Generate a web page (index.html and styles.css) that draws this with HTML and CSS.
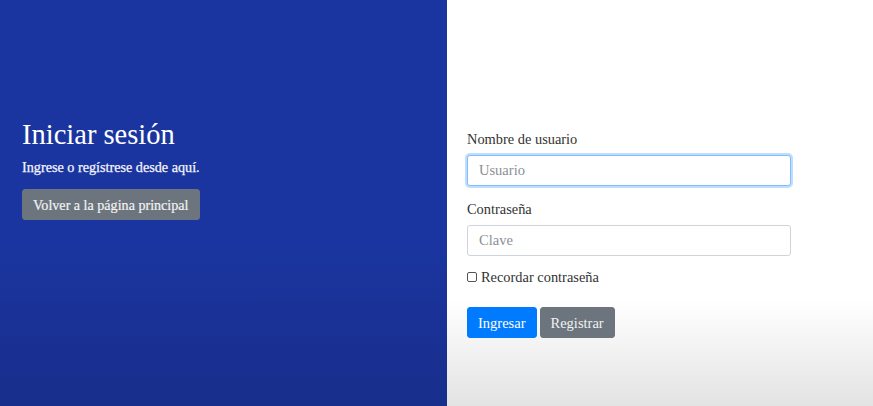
FILE: index.html
```html
<!DOCTYPE html>
<html lang="es">
<head>
<meta charset="utf-8">
<title>Iniciar sesión</title>
<link rel="stylesheet" href="styles.css">
</head>
<body>
<div class="page">
  <section class="intro">
    <h1 class="intro-title">Iniciar sesión</h1>
    <p class="intro-text">Ingrese o regístrese desde aquí.</p>
    <button class="btn btn-gray btn-back" type="button">Volver a la página principal</button>
  </section>
  <section class="panel">
    <form class="login-form">
      <label class="field-label" for="user">Nombre de usuario</label>
      <input class="field-input field-focus" id="user" type="text" placeholder="Usuario">
      <label class="field-label" for="pass">Contraseña</label>
      <input class="field-input" id="pass" type="password" placeholder="Clave">
      <label class="check">
        <span class="check-box"></span>
        <span class="check-text">Recordar contraseña</span>
      </label>
      <div class="actions">
        <button class="btn btn-blue" type="button">Ingresar</button>
        <button class="btn btn-gray" type="button">Registrar</button>
      </div>
    </form>
  </section>
</div>
</body>
</html>
```

FILE: styles.css
```css
* { box-sizing: border-box; }
html, body { margin: 0; padding: 0; }
body {
  font-family: "Liberation Serif", "DejaVu Serif", serif;
  color: #212529;
  width: 873px;
  height: 406px;
  overflow: hidden;
}
.page {
  display: flex;
  height: 406px;
}
.intro {
  width: 447px;
  flex: none;
  background: linear-gradient(to bottom, #1b35a0 0%, #1b35a0 60%, #182e8b 100%);
  color: #fff;
  padding: 118px 0 0 22px;
}
.intro-title {
  margin: 0;
  font-weight: 400;
  font-size: 28.5px;
  line-height: 34px;
}
.intro-text {
  margin: 5px 0 12px;
  font-size: 14.2px;
  line-height: 20px;
  font-weight: 400;
  color: #f4f5fb;
  -webkit-text-stroke: 0.25px #f4f5fb;
}
.btn {
  font-family: inherit;
  font-size: 14.5px;
  line-height: 20px;
  border: 1px solid transparent;
  border-radius: 3px;
  padding: 4px 10px;
  color: #f2f2f2;
  cursor: pointer;
}
.btn-gray { background: #6c757d; border-color: #6c757d; }
.btn-blue { background: #007bff; border-color: #007bff; color: #fff; }
.btn-back {
  height: 31px;
  padding: 4px 10px;
  font-size: 14.1px;
  -webkit-text-stroke: 0.2px #f2f2f2;
}
.panel {
  flex: 1;
  background: linear-gradient(to bottom, #ffffff 0%, #ffffff 74%, #e3e3e3 100%);
  padding: 129px 0 0 20px;
}
.login-form {
  width: 324px;
  display: flex;
  flex-direction: column;
  align-items: flex-start;
}
.field-label {
  font-size: 14.4px;
  line-height: 20px;
  color: #333;
  margin-bottom: 6px;
}
.field-input {
  width: 324px;
  height: 31px;
  border: 1px solid #ced4da;
  border-radius: 3px;
  padding: 4px 11px;
  font-family: inherit;
  font-size: 14.5px;
  color: #495057;
  background: #fff;
  margin-bottom: 13px;
}
.field-input::placeholder { color: #8a8f95; }
.field-focus {
  border-color: #80bdff;
  box-shadow: 0 0 0 2px rgba(0, 123, 255, 0.25);
  outline: none;
}
.check {
  display: flex;
  align-items: center;
  gap: 4px;
  font-size: 14.4px;
  line-height: 20px;
  color: #333;
  margin-top: -2px;
}
.check-box {
  width: 10px;
  height: 10px;
  border: 1px solid #555;
  border-radius: 2px;
  background: #fff;
}
.actions {
  display: flex;
  gap: 3px;
  margin-top: 20px;
}
.actions .btn { height: 31px; padding: 4px 10px; }
```
